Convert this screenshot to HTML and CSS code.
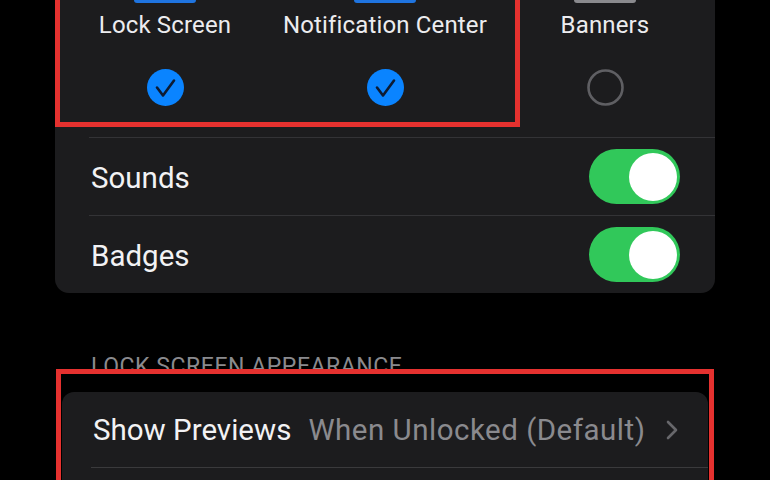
FILE: index.html
```html
<!DOCTYPE html>
<html>
<head>
<meta charset="utf-8">
<link rel="stylesheet" href="styles.css">
</head>
<body>
<div class="screen">
  <section class="card card-top">
    <div class="options">
      <div class="option">
        <div class="thumb thumb-blue"></div>
        <div class="opt-label">Lock Screen</div>
        <svg class="radio" viewBox="0 0 37 37"><circle cx="18.5" cy="18.5" r="18.5" fill="#0a84ff"/><path d="M10 18.5 L16 26.5 L27 11.5" fill="none" stroke="#0d1b33" stroke-width="2.6" stroke-linecap="round" stroke-linejoin="round"/></svg>
      </div>
      <div class="option">
        <div class="thumb thumb-blue"></div>
        <div class="opt-label">Notification Center</div>
        <svg class="radio" viewBox="0 0 37 37"><circle cx="18.5" cy="18.5" r="18.5" fill="#0a84ff"/><path d="M10 18.5 L16 26.5 L27 11.5" fill="none" stroke="#0d1b33" stroke-width="2.6" stroke-linecap="round" stroke-linejoin="round"/></svg>
      </div>
      <div class="option">
        <div class="thumb thumb-gray"></div>
        <div class="opt-label">Banners</div>
        <svg class="radio" viewBox="0 0 37 37"><circle cx="18.5" cy="18.5" r="17" fill="none" stroke="#5f5f63" stroke-width="2.6"/></svg>
      </div>
    </div>
    <div class="row">
      <span class="row-label">Sounds</span>
      <span class="toggle"><span class="knob"></span></span>
    </div>
    <div class="row">
      <span class="row-label">Badges</span>
      <span class="toggle"><span class="knob"></span></span>
    </div>
    <div class="highlight highlight-top"></div>
  </section>

  <section class="group">
    <div class="group-header">LOCK SCREEN APPEARANCE</div>
    <div class="card card-bottom">
      <div class="row row-link">
        <span class="row-label">Show Previews</span>
        <span class="row-value">When Unlocked (Default)</span>
        <svg class="chevron" viewBox="0 0 12 20"><path d="M2 2 L10 10 L2 18" fill="none" stroke="#67676b" stroke-width="2.6" stroke-linecap="round" stroke-linejoin="round"/></svg>
      </div>
      <div class="row row-link"></div>
    </div>
    <div class="highlight highlight-bottom"></div>
  </section>
</div>
</body>
</html>
```

FILE: styles.css
```css
* { box-sizing: border-box; }
html, body {
  margin: 0;
  padding: 0;
  background: #000;
}
body {
  width: 770px;
  height: 480px;
  overflow: hidden;
  font-family: Roboto, "Liberation Sans", sans-serif;
  color: #f2f2f4;
}
.screen {
  padding: 0 55px;
}
.card {
  background: #1c1c1e;
}
.card-top {
  position: relative;
  border-radius: 0 0 14px 14px;
}
.options {
  display: grid;
  grid-template-columns: 220px 220px 220px;
  height: 137px;
}
.option {
  display: flex;
  flex-direction: column;
  align-items: center;
}
.thumb {
  width: 62px;
  height: 3px;
  border-radius: 0 0 4px 4px;
}
.thumb-blue { background: #1f74e0; }
.thumb-gray { background: #8a8a8e; }
.opt-label {
  margin-top: 8px;
  font-size: 24px;
  line-height: 28px;
  letter-spacing: 0.15px;
  color: #ececef;
}
.radio {
  margin-top: 30px;
  width: 37px;
  height: 37px;
}
.row {
  display: flex;
  align-items: center;
  height: 78px;
  margin-left: 34px;
  padding-left: 2px;
  padding-right: 35px;
  border-top: 1px solid #333336;
}
.row-label {
  font-size: 29.5px;
  padding-top: 3px;
  flex: 1;
}
.toggle {
  display: flex;
  justify-content: flex-end;
  align-items: center;
  width: 91px;
  height: 55px;
  border-radius: 28px;
  background: #31c85a;
  padding: 3px;
}
.knob {
  width: 48px;
  height: 48px;
  border-radius: 50%;
  background: #fff;
}
.highlight {
  position: absolute;
  border: 5px solid #e5312f;
  pointer-events: none;
}
.highlight-top {
  left: 0;
  top: -10px;
  width: 465px;
  height: 137px;
}
.group {
  position: relative;
  padding-top: 58px;
}
.group-header {
  padding-left: 36px;
  padding-top: 3px;
  font-size: 23px;
  line-height: 26px;
  letter-spacing: 0.55px;
  color: #8a8a8e;
  height: 41px;
}
.card-bottom {
  margin: 0 7px;
  border-radius: 12px 12px 0 0;
  height: 100px;
}
.card-bottom .row {
  height: 76px;
  margin-left: 29px;
  padding-right: 30px;
  border-top: none;
  border-bottom: 1px solid #3a3a3c;
}
.card-bottom .row-label {
  flex: none;
  padding-top: 1px;
}
.row-value {
  flex: 1;
  margin-left: 17px;
  padding-top: 1px;
  font-size: 29.5px;
  letter-spacing: 0.5px;
  color: #8a8a8e;
}
.chevron {
  width: 12px;
  height: 20px;
}
.highlight-bottom {
  left: 1px;
  top: 76px;
  width: 658px;
  height: 140px;
}
```
